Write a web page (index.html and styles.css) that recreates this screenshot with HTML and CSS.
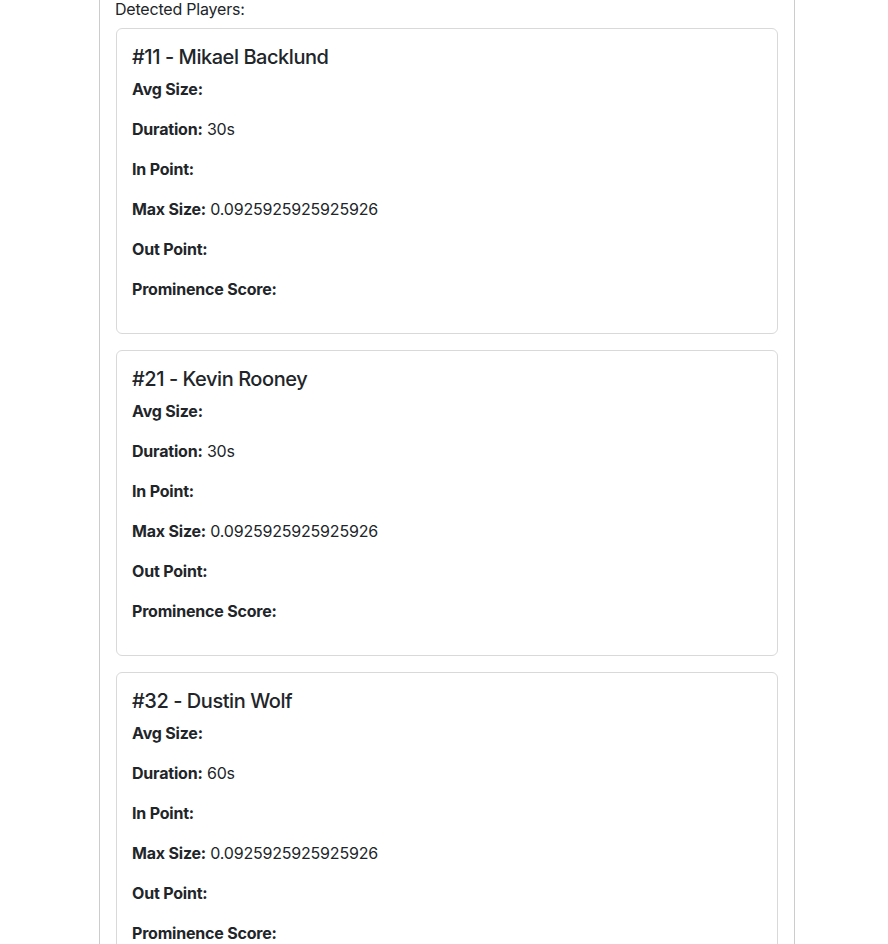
FILE: index.html
```html
<!DOCTYPE html>
<html>
<head>
<meta charset="utf-8">
<link rel="stylesheet" href="styles.css">
</head>
<body>
<div class="panel">
  <div class="label">Detected Players:</div>
  <div class="card">
    <h5 class="title">#11 - Mikael Backlund</h5>
    <p><strong>Avg Size:</strong> </p>
    <p><strong>Duration:</strong> 30s</p>
    <p><strong>In Point:</strong> </p>
    <p><strong>Max Size:</strong> 0.0925925925925926</p>
    <p><strong>Out Point:</strong> </p>
    <p><strong>Prominence Score:</strong> </p>
  </div>
  <div class="card">
    <h5 class="title">#21 - Kevin Rooney</h5>
    <p><strong>Avg Size:</strong> </p>
    <p><strong>Duration:</strong> 30s</p>
    <p><strong>In Point:</strong> </p>
    <p><strong>Max Size:</strong> 0.0925925925925926</p>
    <p><strong>Out Point:</strong> </p>
    <p><strong>Prominence Score:</strong> </p>
  </div>
  <div class="card">
    <h5 class="title">#32 - Dustin Wolf</h5>
    <p><strong>Avg Size:</strong> </p>
    <p><strong>Duration:</strong> 60s</p>
    <p><strong>In Point:</strong> </p>
    <p><strong>Max Size:</strong> 0.0925925925925926</p>
    <p><strong>Out Point:</strong> </p>
    <p><strong>Prominence Score:</strong> </p>
  </div>
</div>
</body>
</html>
```
FILE: styles.css
```css
html, body {
  margin: 0;
  padding: 0;
  background: #fff;
  overflow: hidden;
}
body {
  padding-left: 6px;
  font-family: Inter, "Liberation Sans", sans-serif;
  font-size: 16px;
  line-height: 24px;
  letter-spacing: -0.2px;
  color: #212529;
}
.panel {
  width: 696px;
  box-sizing: border-box;
  margin: -17px auto 0;
  border: 1px solid #ccc;
  padding: 16px 15px 0;
}
.label {
  margin-top: -3px;
  margin-bottom: 7px;
  color: #212529;
}
.card {
  border: 1px solid #d9d9d9;
  border-radius: 6px;
  padding: 16px 15px;
  margin: 0 1px 16px;
}
.title {
  margin: 0 0 8px;
  font-size: 20px;
  line-height: 24px;
  font-weight: 500;
  letter-spacing: -0.45px;
}
.card p {
  margin: 0 0 16px;
}
.card strong {
  font-weight: 700;
}
```
